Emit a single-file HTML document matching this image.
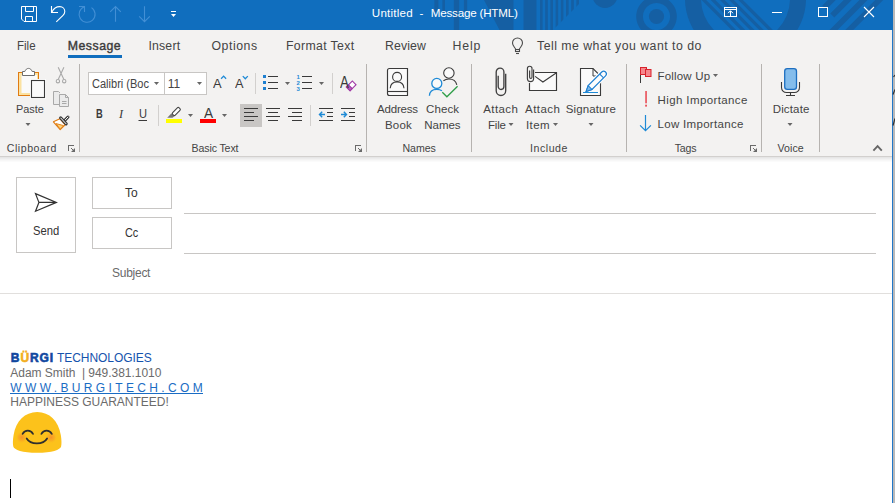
<!DOCTYPE html>
<html lang="en"><head><meta charset="utf-8"><title>Untitled - Message (HTML)</title>
<style>
html,body{margin:0;padding:0;}
body{width:895px;height:503px;overflow:hidden;position:relative;background:#fff;font-family:"Liberation Sans",Arial,sans-serif;}
.t{position:absolute;white-space:pre;line-height:1;}
.abs{position:absolute;}
#titlebar{left:0;top:0;width:893px;height:30px;background:#106ebe;overflow:hidden;}
#ribbon{left:0;top:30px;width:892px;height:126px;background:#f3f2f1;}
#ribshadow{left:0;top:156px;width:892px;height:6px;background:linear-gradient(#d2d0ce 0,#d2d0ce 1px,#e6e6e6 1px,#e6e6e6 2px,#ececec 2px,#ececec 3px,#f2f2f2 3px,#f2f2f2 4px,#f7f7f7 4px,#f7f7f7 5px,#fbfbfb 5px,#fbfbfb 6px);}
.vsep{position:absolute;width:1px;background:#b6b3b0;}
.box{position:absolute;box-sizing:border-box;border:1px solid #c8c6c4;background:#fff;}
.hline{position:absolute;height:1px;background:#c8c6c4;}
svg{position:absolute;overflow:visible;}
</style></head><body>
<div class="abs" id="titlebar"></div>
<div class="abs" id="ribbon"></div>
<div class="abs" id="ribshadow"></div>
<!-- right edge: window border + neighbouring window sliver -->
<div class="abs" style="left:892px;top:30px;width:1px;height:473px;background:#2277c8;"></div>
<div class="abs" style="left:893px;top:0;width:2px;height:503px;background:#b9b9b9;"></div>

<!-- tab underline -->
<div class="abs" style="left:68px;top:55px;width:54px;height:3px;background:#106ebe;"></div>

<!-- group separators -->
<div class="vsep" style="left:79px;top:64px;height:88px;"></div>
<div class="vsep" style="left:366px;top:64px;height:88px;"></div>
<div class="vsep" style="left:471px;top:64px;height:88px;"></div>
<div class="vsep" style="left:626px;top:64px;height:88px;"></div>
<div class="vsep" style="left:761px;top:64px;height:88px;"></div>
<div class="vsep" style="left:819px;top:64px;height:88px;"></div>
<!-- small separators -->
<div class="vsep" style="left:255px;top:73px;height:21px;background:#d2d0ce;"></div>
<div class="vsep" style="left:332px;top:73px;height:21px;background:#d2d0ce;"></div>
<div class="vsep" style="left:158px;top:105px;height:21px;background:#d2d0ce;"></div>
<div class="vsep" style="left:310px;top:105px;height:21px;background:#d2d0ce;"></div>

<!-- font combo boxes -->
<div class="box" style="left:88px;top:72px;width:77px;height:23px;"></div>
<div class="box" style="left:164px;top:72px;width:43px;height:23px;"></div>
<!-- align-left selected bg -->
<div class="abs" style="left:240px;top:104px;width:22px;height:23px;background:#c8c6c4;"></div>

<!-- compose header -->
<div class="box" style="left:16px;top:177px;width:60px;height:76px;"></div>
<div class="box" style="left:92px;top:177px;width:80px;height:32px;"></div>
<div class="box" style="left:92px;top:217px;width:80px;height:32px;"></div>
<div class="hline" style="left:184px;top:213px;width:692px;"></div>
<div class="hline" style="left:184px;top:253px;width:692px;"></div>
<div class="hline" style="left:0;top:293px;width:892px;background:#e1dfdd;"></div>

<!-- link underline -->
<div class="abs" style="left:10px;top:393px;width:193px;height:1px;background:#1a6cc4;"></div>
<!-- caret -->
<div class="abs" style="left:10px;top:479px;width:1px;height:19px;background:#000;"></div>

<svg width="895" height="503" viewBox="0 0 895 503" style="left:0;top:0" fill="none" stroke-linecap="butt">
<!-- ===== title bar pattern ===== -->
<defs>
<clipPath id="cpTitle"><rect x="0" y="0" width="893" height="30"/></clipPath>
<clipPath id="cpTri"><polygon points="523,0 583,0 553,30 523,30"/></clipPath>
<clipPath id="cpBig"><circle cx="745.5" cy="-1.3" r="44.5"/></clipPath>
<clipPath id="cpR"><polygon points="816.8,0 893,0 893,30 846.8,30"/></clipPath>
</defs>
<g clip-path="url(#cpTitle)" stroke="none" fill="#155fa3">
  <rect x="434.4" y="0" width="4" height="12"/>
  <rect x="442.4" y="0" width="2.6" height="12"/>
  <rect x="453.8" y="0" width="5.4" height="30"/>
  <rect x="463.9" y="0" width="3.3" height="12"/>
  <polygon points="484,0 513.5,0 513.5,30 499.5,30"/>
  <rect x="523.5" y="0" width="13" height="30"/>
  <g clip-path="url(#cpTri)">
    <rect x="540" y="0" width="2.6" height="30"/><rect x="545.2" y="0" width="2.6" height="30"/><rect x="550.4" y="0" width="2.6" height="30"/>
    <rect x="555.6" y="0" width="2.6" height="30"/><rect x="560.8" y="0" width="2.6" height="30"/><rect x="566" y="0" width="2.6" height="30"/>
    <rect x="571.2" y="0" width="2.6" height="30"/><rect x="576.4" y="0" width="2.6" height="30"/>
  </g>
  <circle cx="605" cy="-4.5" r="12.5"/>
  <path fill-rule="evenodd" d="M656.5 -3.8a20.3 20.3 0 1 0 0.01 0z M656.5 2.9a13.6 13.6 0 1 1 -0.01 0z"/>
  <circle cx="656.5" cy="16.5" r="7.6"/>
  <circle cx="745.5" cy="-1.3" r="60.5"/>
  <circle cx="745.5" cy="-1.3" r="44.5" fill="#106ebe"/>
  <g clip-path="url(#cpBig)" stroke="#155fa3" stroke-width="3.25">
    <path d="M698.8 -5L743.8 40 M708 -5L753 40 M717.3 -5L762.3 40 M726.5 -5L771.5 40 M735.6 -5L780.6 40"/>
  </g>
  <g stroke="#155fa3" stroke-width="5.66">
    <g clip-path="url(#cpR)"><path d="M836.8 -5L791.8 40 M852.8 -5L807.8 40"/></g>
    <path d="M868.5 -5L823.5 40 M884.2 -5L839.2 40"/>
  </g>
</g>

<!-- ===== title bar icons ===== -->
<g stroke="#fff" stroke-width="1">
  <!-- save -->
  <path d="M21.5 6.5H36.5V21.5H24L21.5 19Z M25.5 6.5V11.5H33.5V6.5 M25.5 21.5V16.5H32.5V21.5"/>
  <!-- undo -->
  <path d="M51.5 6V12.5H58" stroke-width="1.1"/>
  <path d="M51.8 12.2C53.5 8.6 56.6 6.6 59.8 6.6C62.8 6.6 64.8 8.8 64.8 11.4C64.8 13 64.1 14.2 63 15.3L56.3 21.8" stroke-width="1.1"/>
</g>
<g stroke="#428fd5" stroke-width="1.1">
  <!-- redo (disabled) -->
  <path d="M79 6.5H84.5V12"/>
  <path d="M91.5 7.6A8 8 0 1 1 84.5 6.7"/>
  <!-- up / down (disabled) -->
  <path d="M115.5 6.5V21.8 M110.2 11.8L115.5 6.5L120.8 11.8"/>
  <path d="M144.5 6.3V21.6 M139.2 16.3L144.5 21.6L149.8 16.3"/>
</g>
<g fill="#fff" stroke="none">
  <rect x="171" y="11" width="5" height="1"/>
  <polygon points="171,14 176,14 173.5,17"/>
</g>
<!-- window controls -->
<g stroke="#fff" stroke-width="1">
  <rect x="724.5" y="7.5" width="12" height="9"/>
  <path d="M724.5 9.5H736.5 M730.5 11V16.5 M728 13.2L730.5 10.7L733 13.2"/>
  <path d="M772 12.5H782"/>
  <rect x="818.5" y="7.5" width="9" height="9"/>
  <path d="M864 7L874 17 M874 7L864 17" stroke-width="1.1"/>
</g>

<!-- light bulb -->
<g stroke="#4a4a4a" stroke-width="1.1">
  <path d="M515.6 49.3C515.3 47.6 512.5 46 512.5 43A5 5 0 0 1 522.5 43C522.5 46 519.7 47.6 519.4 49.3"/>
  <rect x="515.5" y="49.5" width="4" height="2"/>
  <path d="M516 53.5H519"/>
</g>
<!-- ===== Clipboard group ===== -->
<!-- paste -->
<rect x="18.5" y="72.5" width="20" height="23" fill="#fbe2a2" stroke="#e07b12" stroke-width="1"/>
<rect x="21.5" y="75" width="15.5" height="18" fill="#fafafa" stroke="none"/>
<path d="M22.5 75.5V71.5H24.8C25.6 69.6 26.8 68.4 28.5 68.4C30.2 68.4 31.4 69.6 32.2 71.5H34.5V75.5Z" fill="#fff" stroke="#6e6e6e" stroke-width="1"/>
<rect x="30.5" y="79.5" width="15" height="19" fill="none" stroke="#fdfdfd" stroke-width="1"/>
<rect x="31.5" y="80.5" width="13" height="17" fill="#fafafa" stroke="#3a3a3a" stroke-width="1.1"/>
<polygon points="25.5,123 30.5,123 28,126" fill="#666" stroke="none"/>
<!-- cut (disabled) -->
<g stroke="#a9a9a9" stroke-width="1.1">
  <path d="M58.2 67.3L63.9 79.4 M63.9 67.3L58.2 79.4"/>
  <circle cx="57.9" cy="81.2" r="1.7" fill="#f6f5f4"/><circle cx="64.2" cy="81.2" r="1.7" fill="#f6f5f4"/>
</g>
<!-- copy (disabled) -->
<g stroke="#a9a9a9" stroke-width="1" fill="#ebebeb">
  <path d="M59.5 104.5H53.5V91.5H58.5L60 93"/>
  <path d="M59.5 94.5H65.5L68.5 97.5V106.5H59.5Z"/>
  <path d="M65.5 94.5V97.5H68.5" fill="none"/>
  <path d="M62 101.5H66.5 M62 103.5H66.5" fill="none"/>
</g>
<!-- format painter -->
<path d="M53.4 121.8L59.9 118.7L65.1 124.8L60.2 129.6Z" fill="#fff" stroke="#e07b12" stroke-width="1.1" stroke-linejoin="round"/>
<path d="M56 123.6L63.6 125.6L60.2 129.2Z" fill="#fbd27a" stroke="#e07b12" stroke-width="0.9" stroke-linejoin="round"/>
<path d="M64.6 120.6L68 117" stroke="#3a3a3a" stroke-width="3" stroke-linecap="round"/>
<path d="M64.6 120.6L68 117" stroke="#fff" stroke-width="1" stroke-linecap="round"/>
<path d="M60.6 117.9L66.2 123.9" stroke="#3a3a3a" stroke-width="3.1" stroke-linecap="round"/>
<path d="M60.8 118.1L66 123.7" stroke="#fff" stroke-width="1" stroke-linecap="round"/>
<!-- dialog launchers -->
<g stroke="none" fill="#6a6a6a">
  <rect x="68" y="145" width="6" height="1"/><rect x="68" y="145" width="1" height="6"/>
  <polygon points="75,148 75,152 71,152"/><rect x="71" y="148" width="1" height="1"/><rect x="72" y="149" width="1" height="1"/>
</g>
<g stroke="none" fill="#6a6a6a" transform="translate(287 0)">
  <rect x="68" y="145" width="6" height="1"/><rect x="68" y="145" width="1" height="6"/>
  <polygon points="75,148 75,152 71,152"/><rect x="71" y="148" width="1" height="1"/><rect x="72" y="149" width="1" height="1"/>
</g>
<g stroke="none" fill="#6a6a6a" transform="translate(682 0)">
  <rect x="68" y="145" width="6" height="1"/><rect x="68" y="145" width="1" height="6"/>
  <polygon points="75,148 75,152 71,152"/><rect x="71" y="148" width="1" height="1"/><rect x="72" y="149" width="1" height="1"/>
</g>

<!-- ===== Basic text group ===== -->
<g fill="#666" stroke="none">
  <polygon points="154,82 159,82 156.5,85"/>
  <polygon points="197,82 202,82 199.5,85"/>
  <polygon points="285,82 290,82 287.5,85"/>
  <polygon points="319,82 324,82 321.5,85"/>
  <polygon points="188,114 193,114 190.5,117"/>
  <polygon points="222,114 227,114 224.5,117"/>
</g>
<!-- grow / shrink carets -->
<g stroke="#1e8ad6" stroke-width="1.3">
  <path d="M221.1 78.7L223.6 76.1L226.1 78.7"/>
  <path d="M242.8 76.1L245.3 78.7L247.8 76.1"/>
</g>
<!-- bullets -->
<g fill="#1e7fd0" stroke="none">
  <rect x="263" y="75" width="3" height="3"/><rect x="263" y="81" width="3" height="3"/><rect x="263" y="87" width="3" height="3"/>
</g>
<g fill="#3a3a3a" stroke="none">
  <rect x="268" y="76" width="10" height="1"/><rect x="268" y="82" width="10" height="1"/><rect x="268" y="88" width="10" height="1"/>
  <rect x="302" y="76" width="10" height="1"/><rect x="302" y="82" width="10" height="1"/><rect x="302" y="88" width="10" height="1"/>
</g>
<!-- numbering digits -->
<g fill="#1e8ad6" stroke="none" font-family="Liberation Sans, Arial, sans-serif" font-weight="bold" font-size="6">
  <text x="296.4" y="78.8">1</text><text x="296.4" y="85">2</text><text x="296.4" y="91">3</text>
</g>
<!-- clear formatting eraser -->
<g transform="translate(351.2 85.9) rotate(-45)">
  <rect x="-4.2" y="-2.6" width="8.4" height="5.2" fill="#fff" stroke="#a13aa6" stroke-width="1.1"/>
  <rect x="-4.2" y="-2.6" width="3" height="5.2" fill="#b763bb" stroke="#a13aa6" stroke-width="1.1"/>
</g>
<!-- underline for U -->
<rect x="138.5" y="120" width="8.5" height="1" fill="#3a3a3a" stroke="none"/>
<!-- highlighter -->
<path d="M171.2 113.4L174.5 116.1L172.6 117.8H167.2Z" fill="#777" stroke="none"/>
<g transform="translate(176.3 111.5) rotate(45)">
  <rect x="-1.85" y="-4.6" width="3.7" height="9.2" rx="1.3" fill="#fff" stroke="#444" stroke-width="1.1"/>
</g>
<rect x="166" y="119" width="16" height="4" fill="#ffff00" stroke="none"/>
<rect x="200" y="119" width="16" height="4" fill="#ff0000" stroke="none"/>
<!-- align icons -->
<g fill="#3a3a3a" stroke="none">
  <rect x="244" y="108" width="14" height="1"/><rect x="244" y="112" width="10" height="1"/><rect x="244" y="116" width="14" height="1"/><rect x="244" y="120" width="10" height="1"/>
  <rect x="266" y="108" width="14" height="1"/><rect x="268" y="112" width="10" height="1"/><rect x="266" y="116" width="14" height="1"/><rect x="268" y="120" width="10" height="1"/>
  <rect x="288" y="108" width="14" height="1"/><rect x="292" y="112" width="10" height="1"/><rect x="288" y="116" width="14" height="1"/><rect x="292" y="120" width="10" height="1"/>
  <rect x="319" y="108" width="14" height="1"/><rect x="327" y="112" width="6" height="1"/><rect x="327" y="116" width="6" height="1"/><rect x="319" y="120" width="14" height="1"/>
  <rect x="341" y="108" width="14" height="1"/><rect x="349" y="112" width="6" height="1"/><rect x="349" y="116" width="6" height="1"/><rect x="341" y="120" width="14" height="1"/>
</g>
<g stroke="#1e8ad6" stroke-width="1.4">
  <path d="M319.6 114.5H325 M322.2 111.8L319.5 114.5L322.2 117.2"/>
  <path d="M341 114.5H346.4 M343.8 111.8L346.5 114.5L343.8 117.2"/>
</g>

<!-- ===== Names group ===== -->
<path d="M389.5 68.5H407.5V95.5H389.5A2 2 0 0 1 387.5 93.5V70.5A2 2 0 0 1 389.5 68.5Z" fill="#fafafa" stroke="#3a3a3a" stroke-width="1.15"/>
<path d="M388 91.5H407.5" stroke="#3a3a3a" stroke-width="1.1"/>
<circle cx="397.1" cy="76.9" r="4.5" stroke="#3a3a3a" stroke-width="1.1"/>
<path d="M390.2 88.2C390.6 84 393.4 81.9 397.1 81.9C400.8 81.9 403.6 84 404 88.2" stroke="#3a3a3a" stroke-width="1.1"/>
<!-- check names -->
<circle cx="448.9" cy="73" r="5.2" fill="#fafafa" stroke="#3a3a3a" stroke-width="1.1"/>
<path d="M443.4 80.8C445 79.6 446.8 79 448.9 79C453.2 79 456 81.4 456.8 84.8" stroke="#3a3a3a" stroke-width="1.1"/>
<circle cx="436.8" cy="83.4" r="5" fill="#fafafa" stroke="#1e8ad6" stroke-width="1.3"/>
<path d="M429.4 95.8C429.6 91.6 432.6 89.3 436.8 89.3C438.8 89.3 440.6 89.8 441.9 90.8" stroke="#1e8ad6" stroke-width="1.3"/>
<path d="M442.3 92.2L446.9 96.8L457.6 86.2" stroke="#2e9e48" stroke-width="1.3"/>

<!-- ===== Include group ===== -->
<path id="clip" d="M505.7 73.7V90.7A4.75 4.75 0 0 1 496.2 90.7V71.9A3.85 3.85 0 0 1 503.9 71.9V86.6A2.85 2.85 0 0 1 498.2 86.6V75.8" stroke="#404040" stroke-width="1.35"/>
<polygon points="508.5,123 513.5,123 511,126" fill="#666" stroke="none"/>
<!-- attach item -->
<path d="M529.5 83V90.5H556.5V72.5H535" fill="#fafafa" stroke="#3a3a3a" stroke-width="1.15"/>
<path d="M535.1 76.4L542.9 82L556.5 72.7" stroke="#3a3a3a" stroke-width="1.1"/>
<path d="M533.6 69.4V78.6A3.1 3.1 0 0 1 527.4 78.6V68.5A2.3 2.3 0 0 1 532 68.5V77.2A1.2 1.2 0 0 1 529.6 77.2V70.5" stroke="#404040" stroke-width="1.15"/>
<polygon points="553,123 558,123 555.5,126" fill="#666" stroke="none"/>
<!-- signature -->
<path d="M580.5 68.5H593L600.5 76V95.5H580.5Z" fill="#fafafa" stroke="#3a3a3a" stroke-width="1.1"/>
<path d="M593 68.5V76H600.5" stroke="#3a3a3a" stroke-width="1"/>
<g transform="translate(596.3 81.3) rotate(45)">
  <path d="M-2.7 -10.4A2.7 2.7 0 0 1 2.7 -10.4V8.8L0 14.4L-2.7 8.8Z" fill="#fff" stroke="#fdfdfd" stroke-width="3.4"/>
  <path d="M-2.7 -10.4A2.7 2.7 0 0 1 2.7 -10.4V8.8L0 14.4L-2.7 8.8Z" fill="#fdfdfd" stroke="#1e7fd0" stroke-width="1.2"/>
  <path d="M-2.7 8.8H2.7L0 14.4Z" fill="#7db9ea" stroke="#1e7fd0" stroke-width="1"/>
  <path d="M-2.7 -7.6H2.7" stroke="#1e7fd0" stroke-width="1.1"/>
</g>
<rect x="583" y="92" width="15" height="1" fill="#1e8ad6" stroke="none"/>
<polygon points="588.5,123 593.5,123 591,126" fill="#666" stroke="none"/>

<!-- ===== Tags group ===== -->
<rect x="640" y="68" width="1" height="15" fill="#3a3a3a" stroke="none"/>
<rect x="640.5" y="67.5" width="6" height="7" fill="#f5868c" stroke="#d8222c" stroke-width="1"/>
<rect x="645.5" y="69.5" width="5.5" height="7" fill="#f5868c" stroke="#d8222c" stroke-width="1"/>
<polygon points="713,74 718,74 715.5,77" fill="#666" stroke="none"/>
<rect x="645.3" y="91" width="1.5" height="12.3" fill="#e8434c" stroke="none"/>
<rect x="645.2" y="104.7" width="1.7" height="1.9" fill="#e8434c" stroke="none"/>
<path d="M645.5 115V130.6 M640.1 125.3L645.5 130.7L650.9 125.3" stroke="#1e8ad6" stroke-width="1.2"/>

<!-- ===== Voice ===== -->
<rect x="784.7" y="68.6" width="11.8" height="20.8" rx="2.6" fill="#84bdec" stroke="#1e6fc0" stroke-width="1.3"/>
<path d="M781.5 82V87.5A5 5 0 0 0 786.5 92.5H794.5A5 5 0 0 0 799.5 87.5V82 M790.5 92.5V95.5 M786 95.5H795" stroke="#3a3a3a" stroke-width="1.1"/>
<polygon points="787.5,123 792.5,123 790,126" fill="#666" stroke="none"/>
<!-- collapse chevron -->
<path d="M873.4 150.6L877.6 146.2L881.8 150.6" stroke="#666" stroke-width="1.9"/>

<path d="M893 94.5L895 89.5 M893 125.5L895 118.5 M893.5 77L895 75" stroke="#333" stroke-width="1.2"/>
<!-- ===== Send icon ===== -->
<path d="M35.5 193.6L56.4 202.4L35.5 211.2L38.9 202.4Z M38.9 202.4H56" stroke="#333" stroke-width="1.2" stroke-linejoin="miter"/>

<!-- ===== emoji ===== -->
<defs>
<radialGradient id="blush"><stop offset="0" stop-color="#f6902a" stop-opacity="0.95"/><stop offset="0.55" stop-color="#f89f26" stop-opacity="0.55"/><stop offset="1" stop-color="#fcc21b" stop-opacity="0"/></radialGradient>
</defs>
<path d="M37.2 412C49.5 412 58.5 421 60.8 435C61.6 440 61.7 444 61.1 446.4C60.3 449.6 52 452.8 37.2 452.8C22.4 452.8 14.1 449.6 13.3 446.4C12.7 444 12.8 440 13.6 435C15.9 421 24.9 412 37.2 412Z" fill="#fcc21b" stroke="none"/>
<circle cx="21.7" cy="437.4" r="6.2" fill="url(#blush)" stroke="none"/>
<circle cx="51.1" cy="437.4" r="6.2" fill="url(#blush)" stroke="none"/>
<g stroke="#2f2f2f" stroke-width="1.75" stroke-linecap="round">
  <path d="M22.6 433.9C23.8 431.7 25.7 430.7 27.8 430.7C29.9 430.7 31.8 431.7 33 433.9"/>
  <path d="M41.4 433.9C42.6 431.7 44.5 430.7 46.6 430.7C48.7 430.7 50.6 431.7 51.8 433.9"/>
  <path d="M26.7 438.5C28.6 441.8 32.4 443.4 36.9 443.4C41.4 443.4 45.2 441.8 47.1 438.5"/>
</g>
</svg>

<span class="t" style="left:371.80px;top:7px;font-size:11.6px;color:#fff;letter-spacing:0.220px;">Untitled</span>
<span class="t" style="left:419.50px;top:7px;font-size:11.6px;color:#fff;">-</span>
<span class="t" style="left:430.70px;top:7px;font-size:11.6px;color:#fff;letter-spacing:-0.183px;">Message (HTML)</span>
<span class="t" style="left:16.66px;top:40px;font-size:12.3px;color:#444;transform-origin:0 0;transform:scaleX(0.938);">File</span>
<span class="t" style="left:67.80px;top:40px;font-size:12.3px;color:#3b3b3b;letter-spacing:0.490px;-webkit-text-stroke:0.4px #3b3b3b;">Message</span>
<span class="t" style="left:148.40px;top:40px;font-size:12.3px;color:#444;letter-spacing:0.192px;">Insert</span>
<span class="t" style="left:211.50px;top:40px;font-size:12.3px;color:#444;letter-spacing:0.545px;">Options</span>
<span class="t" style="left:286.00px;top:40px;font-size:12.3px;color:#444;letter-spacing:0.350px;">Format Text</span>
<span class="t" style="left:385.00px;top:40px;font-size:12.3px;color:#444;letter-spacing:0.112px;">Review</span>
<span class="t" style="left:452.50px;top:40px;font-size:12.3px;color:#444;letter-spacing:0.850px;">Help</span>
<span class="t" style="left:537.00px;top:40px;font-size:12.3px;color:#444;letter-spacing:0.485px;">Tell me what you want to do</span>
<span class="t" style="left:15.50px;top:104px;font-size:11.5px;color:#444;transform-origin:0 0;transform:scaleX(0.948);">Paste</span>
<span class="t" style="left:6.75px;top:143px;font-size:10.6px;color:#444;letter-spacing:0.537px;">Clipboard</span>
<span class="t" style="left:92.00px;top:78px;font-size:12px;color:#444;transform-origin:0 0;transform:scaleX(0.919);">Calibri (Boc</span>
<span class="t" style="left:167.80px;top:78px;font-size:12px;color:#444;">11</span>
<span class="t" style="left:191.50px;top:143px;font-size:10.6px;color:#444;letter-spacing:-0.120px;">Basic Text</span>
<span class="t" style="left:377.00px;top:104px;font-size:11.5px;color:#444;letter-spacing:-0.190px;">Address</span>
<span class="t" style="left:385.00px;top:120px;font-size:11.5px;color:#444;letter-spacing:0.179px;">Book</span>
<span class="t" style="left:426.00px;top:104px;font-size:11.5px;color:#444;letter-spacing:0.113px;">Check</span>
<span class="t" style="left:424.30px;top:120px;font-size:11.5px;color:#444;letter-spacing:-0.044px;">Names</span>
<span class="t" style="left:402.50px;top:143px;font-size:10.6px;color:#444;letter-spacing:-0.040px;">Names</span>
<span class="t" style="left:483.30px;top:104px;font-size:11.5px;color:#444;letter-spacing:0.399px;">Attach</span>
<span class="t" style="left:488.00px;top:120px;font-size:11.5px;color:#444;letter-spacing:-0.212px;">File</span>
<span class="t" style="left:525.00px;top:104px;font-size:11.5px;color:#444;letter-spacing:0.459px;">Attach</span>
<span class="t" style="left:526.00px;top:120px;font-size:11.5px;color:#444;letter-spacing:0.405px;">Item</span>
<span class="t" style="left:565.75px;top:104px;font-size:11.5px;color:#444;letter-spacing:0.115px;">Signature</span>
<span class="t" style="left:530.00px;top:143px;font-size:10.6px;color:#444;letter-spacing:0.539px;">Include</span>
<span class="t" style="left:657.50px;top:71px;font-size:11.5px;color:#444;letter-spacing:0.184px;">Follow Up</span>
<span class="t" style="left:657.50px;top:95px;font-size:11.5px;color:#444;letter-spacing:0.394px;">High Importance</span>
<span class="t" style="left:657.50px;top:119px;font-size:11.5px;color:#444;letter-spacing:0.314px;">Low Importance</span>
<span class="t" style="left:674.70px;top:143px;font-size:10.6px;color:#444;letter-spacing:-0.193px;">Tags</span>
<span class="t" style="left:772.70px;top:104px;font-size:11.5px;color:#444;letter-spacing:0.151px;">Dictate</span>
<span class="t" style="left:777.40px;top:143px;font-size:10.6px;color:#444;letter-spacing:0.094px;">Voice</span>
<span class="t" style="left:213.20px;top:77px;font-size:13.5px;color:#3a3a3a;transform-origin:0 0;transform:scaleX(0.956);">A</span>
<span class="t" style="left:235.40px;top:77px;font-size:13.5px;color:#3a3a3a;transform-origin:0 0;transform:scaleX(0.944);">A</span>
<span class="t" style="left:340.00px;top:74px;font-size:17px;color:#3a3a3a;transform-origin:0 0;transform:scaleX(0.783);">A</span>
<span class="t" style="left:203.60px;top:106px;font-size:14.5px;color:#3a3a3a;transform-origin:0 0;transform:scaleX(0.940);">A</span>
<span class="t" style="left:95.90px;top:108px;font-size:12.5px;color:#3a3a3a;transform-origin:0 0;transform:scaleX(0.744);font-weight:bold;">B</span>
<span class="t" style="left:118.81px;top:107px;font-size:13.5px;color:#3a3a3a;transform-origin:0 0;transform:scaleX(0.914);font-style:italic;font-family:Liberation Serif,serif;">I</span>
<span class="t" style="left:138.70px;top:108px;font-size:12.5px;color:#3a3a3a;transform-origin:0 0;transform:scaleX(0.889);">U</span>
<span class="t" style="left:33.20px;top:225px;font-size:12px;color:#333;transform-origin:0 0;transform:scaleX(0.936);">Send</span>
<span class="t" style="left:124.90px;top:187px;font-size:12px;color:#333;letter-spacing:0.100px;">To</span>
<span class="t" style="left:125.30px;top:227px;font-size:12px;color:#333;transform-origin:0 0;transform:scaleX(0.907);">Cc</span>
<span class="t" style="left:112.10px;top:267px;font-size:12px;color:#6a6a6a;letter-spacing:-0.282px;">Subject</span>
<span class="t" style="left:10.80px;top:352px;font-size:12px;color:#10479f;letter-spacing:0.917px;font-weight:bold;-webkit-text-stroke:0.6px #10479f;">B<span style="color:#f2ae1c;-webkit-text-stroke-color:#f2ae1c">Ü</span>RGI</span>
<span class="t" style="left:57.00px;top:352px;font-size:12px;color:#1553ad;letter-spacing:-0.059px;">TECHNOLOGIES</span>
<span class="t" style="left:10.30px;top:367px;font-size:12px;color:#6b6b6b;letter-spacing:-0.032px;">Adam Smith  | 949.381.1010</span>
<span class="t" style="left:10.30px;top:382px;font-size:12px;color:#1a6cc4;letter-spacing:3.365px;">WWW.BURGITECH.COM</span>
<span class="t" style="left:10.30px;top:396px;font-size:12px;color:#6b6b6b;letter-spacing:-0.013px;">HAPPINESS GUARANTEED!</span>
</body></html>
